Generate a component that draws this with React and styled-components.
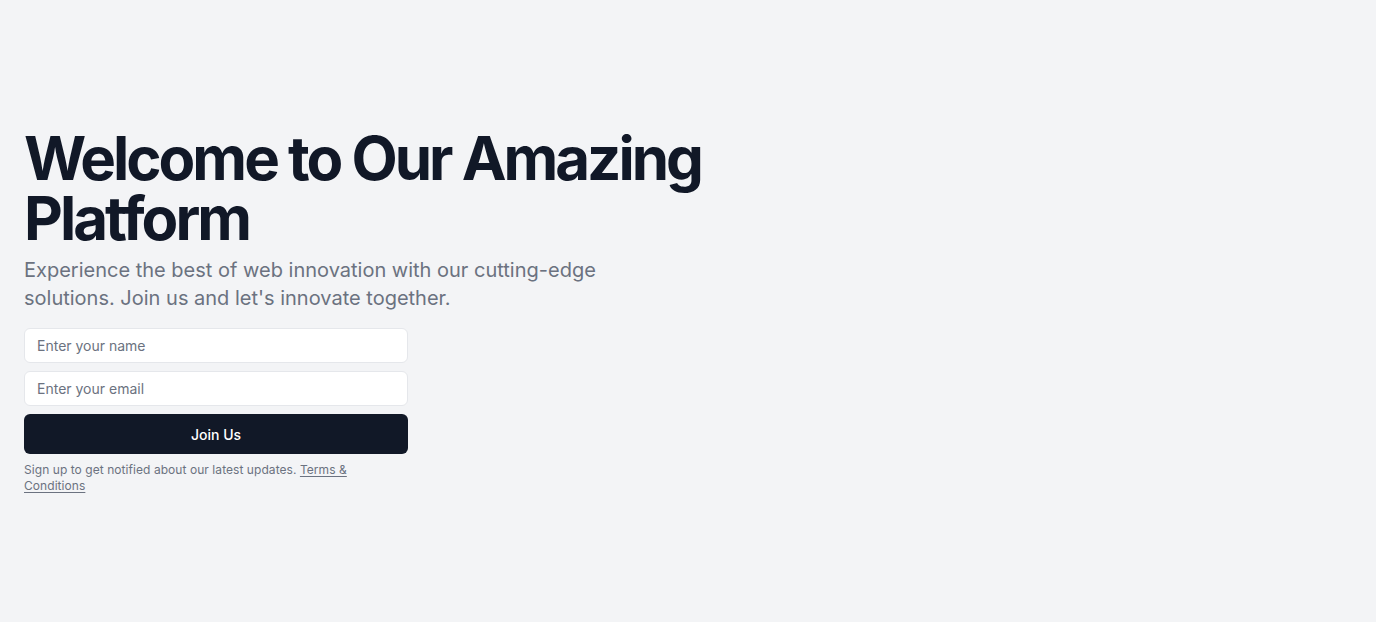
import React from "react";
import styled, { createGlobalStyle } from "styled-components";

const Global = createGlobalStyle`
  html, body { margin: 0; padding: 0; }
  body {
    background: #f3f4f6;
    font-family: Inter, "Noto Sans", sans-serif;
    color: #111827;
  }
  * { box-sizing: border-box; }
`;

const Page = styled.main`
  min-height: 100vh;
  display: flex;
  align-items: center;
  padding: 0 24px;
`;

const Content = styled.div`
  display: flex;
  flex-direction: column;
  gap: 16px;
`;

const Intro = styled.div`
  display: flex;
  flex-direction: column;
  gap: 8px;
`;

const Title = styled.h1`
  margin: 0;
  font-size: 60px;
  line-height: 1;
  font-weight: 700;
  letter-spacing: -0.05em;
  color: #111827;
`;

const Lead = styled.p`
  margin: 0;
  max-width: 600px;
  font-size: 20px;
  line-height: 28px;
  color: #6b7280;
`;

const FormArea = styled.div`
  width: 384px;
  display: flex;
  flex-direction: column;
  gap: 8px;
`;

const Form = styled.form`
  display: flex;
  flex-direction: column;
  gap: 8px;
`;

const Input = styled.input`
  height: 35px;
  width: 100%;
  padding: 0 12px;
  border: 1px solid #e5e7eb;
  border-radius: 6px;
  background: #ffffff;
  font-family: inherit;
  font-size: 14px;
  color: #111827;
  outline: none;
  &::placeholder { color: #6b7280; }
`;

const Button = styled.button`
  height: 40px;
  width: 100%;
  border: none;
  border-radius: 6px;
  background: #111827;
  color: #ffffff;
  font-family: inherit;
  font-size: 14px;
  font-weight: 500;
  cursor: pointer;
`;

const Note = styled.p`
  margin: 0;
  font-size: 12px;
  line-height: 16px;
  letter-spacing: 0.06px;
  color: #6b7280;
`;

const Link = styled.a`
  color: #6b7280;
  text-decoration: underline;
  text-underline-offset: 2px;
`;

export default function App() {
  return (
    <>
      <Global />
      <Page>
        <Content>
          <Intro>
            <Title>
              Welcome to Our Amazing
              <br />
              Platform
            </Title>
            <Lead>
              Experience the best of web innovation with our cutting-edge
              solutions. Join us and let's innovate together.
            </Lead>
          </Intro>
          <FormArea>
            <Form onSubmit={(e) => e.preventDefault()}>
              <Input type="text" placeholder="Enter your name" />
              <Input type="email" placeholder="Enter your email" />
              <Button type="submit">Join Us</Button>
            </Form>
            <Note>
              Sign up to get notified about our latest updates.{" "}
              <Link href="#">Terms &amp; Conditions</Link>
            </Note>
          </FormArea>
        </Content>
      </Page>
    </>
  );
}
